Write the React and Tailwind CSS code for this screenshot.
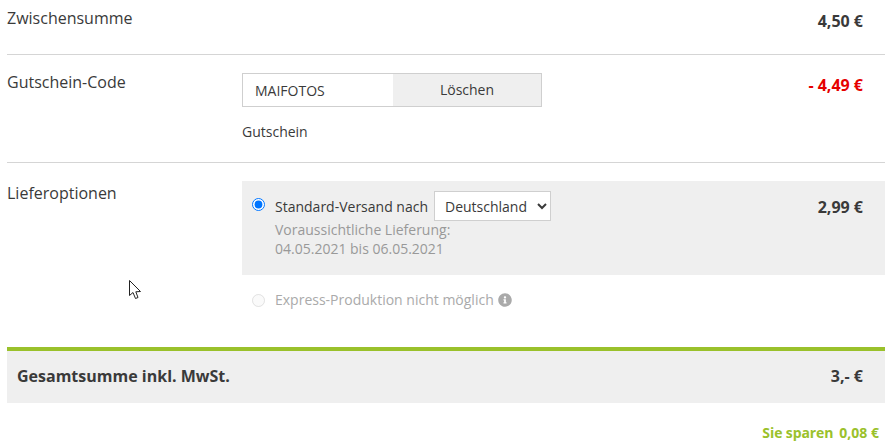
import { FaInfoCircle } from 'react-icons/fa';

const Cursor = () => (
    <svg width="14" height="21" viewBox="0 0 14 21" className="absolute left-[129px] top-[280px]">
        <path d="M0.5 0.5 L0.5 15.5 L4 12.5 L6.5 18.5 L9 17.5 L6.8 11.8 L11.5 11.5 Z" fill="#fff" stroke="#222" strokeWidth="1" />
    </svg>
);

const App = () => {
    return (
        <div className="relative w-[885px] h-[444px] overflow-hidden bg-white pl-[7px] font-['Open_Sans',sans-serif] text-[14px] text-[#3a3a3a]">
            <div className="flex h-[55px] border-b border-[#d5d5d5]">
                <div className="w-[235px] pt-[7px] text-[16px] leading-[22px]">Zwischensumme</div>
                <div className="flex-1 pt-[10px] pr-[22px] text-right text-[16px] font-bold leading-[22px]">4,50 €</div>
            </div>

            <div className="flex h-[108px] border-b border-[#d5d5d5]">
                <div className="w-[235px] pt-[16px] text-[16px] leading-[22px]">Gutschein-Code</div>
                <div className="w-[300px] pt-[18px]">
                    <div className="flex h-[34px] border border-[#cfcfcf]">
                        <div className="w-[150px] pl-[12px] leading-[34px]">MAIFOTOS</div>
                        <div className="flex-1 bg-[#efefef] text-center leading-[32px]">Löschen</div>
                    </div>
                    <div className="mt-[14px] leading-[22px]">Gutschein</div>
                </div>
                <div className="flex-1 pt-[19px] pr-[22px] text-right text-[16px] font-bold leading-[22px] text-[#e60000]">- 4,49 €</div>
            </div>

            <div className="flex h-[184px]">
                <div className="w-[235px] pt-[19px] text-[16px] leading-[22px]">Lieferoptionen</div>
                <div className="flex-1 pt-[18px]">
                    <div className="flex h-[94px] bg-[#efefef] pl-[10px] pr-[22px] pt-[10px]">
                        <input type="radio" defaultChecked className="mt-[7px] h-[13px] w-[13px] m-0" />
                        <div className="ml-[10px] flex-1">
                            <div className="flex items-center">
                                <span>Standard-Versand nach</span>
                                <select className="ml-[6px] h-[30px] w-[117px] border border-[#cfcfcf] bg-white pl-[6px] text-[14px]">
                                    <option>Deutschland</option>
                                </select>
                            </div>
                            <div className="-mt-px leading-[19px] text-[#999]">
                                Voraussichtliche Lieferung:
                                <br />
                                04.05.2021 bis 06.05.2021
                            </div>
                        </div>
                        <div className="pt-[5px] text-[16px] font-bold leading-[22px]">2,99 €</div>
                    </div>
                    <div className="flex items-center pl-[10px] pt-[15px]">
                        <input type="radio" disabled className="h-[13px] w-[13px] m-0 opacity-60" />
                        <span className="ml-[10px] leading-[20px] text-[#aaa]">Express-Produktion nicht möglich</span>
                        <FaInfoCircle className="ml-[4px] text-[14px] text-[#aaa]" />
                    </div>
                </div>
            </div>

            <div className="flex h-[56px] items-center border-t-4 border-[#9ac12b] bg-[#efefef] pb-[3px] pl-[10px] pr-[22px] font-bold">
                <div className="flex-1 text-[16px]">Gesamtsumme inkl. MwSt.</div>
                <div className="text-[16px]">3,- €</div>
            </div>

            <div className="flex justify-end gap-[6px] pt-[20px] pr-[6px] text-[14px] font-bold leading-[20px] text-[#9ac12b]">
                <span className="tracking-[-0.1px]">Sie sparen</span>
                <span>0,08 €</span>
            </div>

            <Cursor />
        </div>
    );
};

export default App;
